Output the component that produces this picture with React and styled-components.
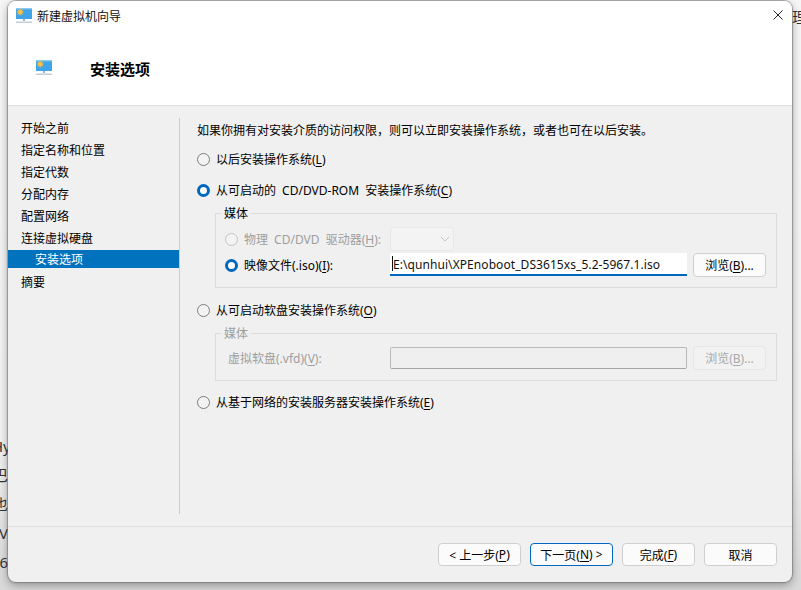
import React from 'react';
import styled, { createGlobalStyle } from 'styled-components';

const GlobalStyle = createGlobalStyle`
  html, body {
    margin: 0;
    padding: 0;
    background: #e6e6e6;
    overflow: hidden;
  }
  * {
    box-sizing: border-box;
  }
`;

const navItems = [
  { name: '开始之前' },
  { name: '指定名称和位置' },
  { name: '指定代数' },
  { name: '分配内存' },
  { name: '配置网络' },
  { name: '连接虚拟硬盘' },
  { name: '安装选项', active: true },
  { name: '摘要' },
];

const leftScraps = [
  { text: 'Hy', top: 436 },
  { text: '巴', top: 465 },
  { text: '也', top: 494 },
  { text: 'V', top: 523 },
  { text: '6', top: 552 },
];

function MonitorIcon({ width = 16, height = 16 }) {
  return (
    <svg width={width} height={height} viewBox="0 0 16 16">
      <rect x="0" y="0.5" width="16" height="10.5" fill="#3fa4e8" />
      <rect x="0" y="0.5" width="16" height="1" fill="#72c3f3" />
      <circle cx="4.2" cy="4" r="2.6" fill="#f7b52c" />
      <path d="M4.2 0.4v7.2M0.8 4h6.8M1.8 1.6l4.8 4.8M6.6 1.6l-4.8 4.8" stroke="#f7c85c" strokeWidth="0.7" />
      <rect x="7" y="11" width="2" height="2" fill="#9fb4c4" />
      <rect x="0" y="13.5" width="16" height="1.5" fill="#c3ced6" />
    </svg>
  );
}

function Key({ children }) {
  return <KeyLetter>{children}</KeyLetter>;
}

export default function App() {
  return (
    <Desktop>
      <GlobalStyle />
      {leftScraps.map(({ text, top }) => (
        <LeftScrap key={top} style={{ top }}>
          {text}
        </LeftScrap>
      ))}
      <RightScrap>理</RightScrap>
      <Wizard>
        <TitleBar>
          <MonitorIcon />
          <TitleText>新建虚拟机向导</TitleText>
          <CloseButton>
            <svg width="10" height="10" viewBox="0 0 10 10">
              <path d="M0.5 0.5l9 9M9.5 0.5l-9 9" stroke="#222" strokeWidth="1" fill="none" />
            </svg>
          </CloseButton>
        </TitleBar>
        <Banner>
          <MonitorIcon />
          <BannerTitle>安装选项</BannerTitle>
        </Banner>
        <Body>
          <Sidebar>
            {navItems.map(({ name, active }) => (
              <NavItem key={name} $active={active}>
                {name}
              </NavItem>
            ))}
          </Sidebar>
          <Content>
            <Intro>如果你拥有对安装介质的访问权限，则可以立即安装操作系统，或者也可在以后安装。</Intro>
            <OptionRow $mt={11}>
              <Radio />
              <span>
                以后安装操作系统(<Key>L</Key>)
              </span>
            </OptionRow>
            <OptionRow $mt={13}>
              <Radio $checked />
              <SpacedText>
                从可启动的 CD/DVD-ROM 安装操作系统(<Key>C</Key>)
              </SpacedText>
            </OptionRow>
            <MediaGroup $height={75} $pt={13}>
              <GroupLegend>媒体</GroupLegend>
              <FieldRow>
                <FieldLabel $disabled>
                  <Radio $disabled />
                  <SpacedText>
                    物理 CD/DVD 驱动器(<Key>H</Key>):
                  </SpacedText>
                </FieldLabel>
                <DriveSelect>
                  <svg width="10" height="6" viewBox="0 0 10 6">
                    <path d="M1 1l4 4 4-4" stroke="#c4c4c4" strokeWidth="1" fill="none" />
                  </svg>
                </DriveSelect>
              </FieldRow>
              <FieldRow $mt={2}>
                <FieldLabel>
                  <Radio $checked />
                  <span>
                    映像文件(.iso)(<Key>I</Key>):
                  </span>
                </FieldLabel>
                <PathInput>
                  <Caret />
                  E:\qunhui\XPEnoboot_DS3615xs_5.2-5967.1.iso
                </PathInput>
                <BrowseButton>
                  浏览(<Key>B</Key>)...
                </BrowseButton>
              </FieldRow>
            </MediaGroup>
            <OptionRow $mt={13}>
              <Radio />
              <span>
                从可启动软盘安装操作系统(<Key>O</Key>)
              </span>
            </OptionRow>
            <MediaGroup $height={48} $pt={12}>
              <GroupLegend $disabled>媒体</GroupLegend>
              <FieldRow>
                <FieldLabel $disabled $indent>
                  <span>
                    虚拟软盘(.vfd)(<Key>V</Key>):
                  </span>
                </FieldLabel>
                <PathInput $disabled />
                <BrowseButton $disabled>
                  浏览(<Key>B</Key>)...
                </BrowseButton>
              </FieldRow>
            </MediaGroup>
            <OptionRow $mt={12}>
              <Radio />
              <span>
                从基于网络的安装服务器安装操作系统(<Key>E</Key>)
              </span>
            </OptionRow>
          </Content>
        </Body>
        <Footer>
          <FooterButton $wide>
            &lt; 上一步(<Key>P</Key>)
          </FooterButton>
          <FooterButton $wide $primary>
            下一页(<Key>N</Key>) &gt;
          </FooterButton>
          <FooterButton>
            完成(<Key>F</Key>)
          </FooterButton>
          <FooterButton>取消</FooterButton>
        </Footer>
      </Wizard>
    </Desktop>
  );
}

const fontStack = `"Noto Sans", "Noto Sans CJK SC", sans-serif`;

const Desktop = styled.div`
  position: relative;
  width: 801px;
  height: 590px;
  overflow: hidden;
  background: linear-gradient(#f6f6f6, #f2f2f2 75%, #d8d8d8);
  font-family: ${fontStack};
  font-size: 12px;
  color: #000;
`;

const LeftScrap = styled.div`
  position: absolute;
  left: -8px;
  width: 16px;
  text-align: right;
  font-size: 15px;
  line-height: 20px;
  color: #333;
`;

const RightScrap = styled.div`
  position: absolute;
  left: 792px;
  top: 7px;
  font-size: 15px;
  line-height: 20px;
  color: #333;
`;

const Wizard = styled.div`
  position: absolute;
  left: 8px;
  top: 1px;
  width: 784px;
  height: 581px;
  display: flex;
  flex-direction: column;
  background: #f0f0f0;
  border-radius: 8px;
  overflow: hidden;
  box-shadow: 0 0 1px 1px rgba(110, 110, 110, 0.6), 0 3px 10px rgba(0, 0, 0, 0.35);
`;

const TitleBar = styled.div`
  height: 30px;
  display: flex;
  align-items: center;
  gap: 5px;
  padding: 0 8px;
  background: #fff;
`;

const TitleText = styled.div`
  flex: 1;
  font-size: 12px;
  color: #111;
`;

const CloseButton = styled.div`
  display: flex;
  margin: 0 1px 2px 0;
`;

const Banner = styled.div`
  height: 75px;
  display: flex;
  align-items: center;
  padding-left: 28px;
  gap: 38px;
  background: #fff;
  border-bottom: 1px solid #dfdfdf;
`;

const BannerTitle = styled.div`
  font-size: 15px;
  font-weight: 700;
  color: #000;
`;

const Body = styled.div`
  flex: 1;
  display: flex;
  padding: 12px 0;
`;

const Sidebar = styled.div`
  flex: none;
  width: 172px;
  border-right: 1px solid #cccccc;
`;

const NavItem = styled.div`
  height: ${(p) => (p.$active ? '18px' : '22px')};
  line-height: ${(p) => (p.$active ? '20px' : '22px')};
  margin: ${(p) => (p.$active ? '0 0 4px 0' : '0')};
  padding-left: ${(p) => (p.$active ? '27px' : '13px')};
  font-size: 12px;
  color: ${(p) => (p.$active ? '#fff' : '#000')};
  background: ${(p) => (p.$active ? '#0072be' : 'transparent')};
`;

const Content = styled.div`
  flex: 1;
  min-width: 0;
  padding: 0 15px 0 17px;
`;

const Intro = styled.div`
  font-size: 12px;
  line-height: 16px;
  margin-top: 5px;
  color: #000;
  white-space: nowrap;
`;

const OptionRow = styled.div`
  display: flex;
  align-items: center;
  gap: 6px;
  height: 18px;
  margin-top: ${(p) => p.$mt}px;
  font-size: 12px;
  color: #000;
`;

const SpacedText = styled.span`
  word-spacing: 3px;
`;

const Radio = styled.span`
  flex: none;
  width: 13px;
  height: 13px;
  border-radius: 50%;
  background: ${(p) => (p.$checked ? '#fff' : '#f3f3f3')};
  border: ${(p) =>
    p.$checked
      ? '3.5px solid #0067c0'
      : p.$disabled
        ? '1px solid #c2c2c2'
        : '1px solid #7d7d7d'};
`;

const MediaGroup = styled.div`
  position: relative;
  height: ${(p) => p.$height}px;
  margin: 14px 0 0 18px;
  padding: ${(p) => p.$pt}px 10px 0 9px;
  border: 1px solid #dcdcdc;
`;

const GroupLegend = styled.div`
  position: absolute;
  top: -7px;
  left: 5px;
  padding: 0 3px;
  background: #f0f0f0;
  line-height: 14px;
  font-size: 12px;
  color: ${(p) => (p.$disabled ? '#9e9e9e' : '#000')};
`;

const FieldRow = styled.div`
  display: flex;
  align-items: flex-start;
  height: 24px;
  margin-top: ${(p) => p.$mt || 0}px;
`;

const FieldLabel = styled.div`
  flex: none;
  width: 165px;
  height: 24px;
  display: flex;
  align-items: center;
  gap: 6px;
  padding-left: ${(p) => (p.$indent ? '3px' : '0')};
  font-size: 12px;
  white-space: nowrap;
  color: ${(p) => (p.$disabled ? '#9e9e9e' : '#000')};
`;

const DriveSelect = styled.div`
  width: 64px;
  height: 24px;
  display: flex;
  align-items: center;
  justify-content: flex-end;
  padding-right: 3px;
  background: #f3f3f3;
  border: 1px solid #e8e8e8;
  border-radius: 3px;
`;

const PathInput = styled.div`
  position: relative;
  flex: none;
  width: 297px;
  height: ${(p) => (p.$disabled ? '22px' : '23px')};
  margin-top: ${(p) => (p.$disabled ? '1px' : '0')};
  padding-left: 3px;
  line-height: 23px;
  font-size: 12px;
  letter-spacing: 0.07px;
  white-space: nowrap;
  color: #111;
  background: ${(p) => (p.$disabled ? '#efefef' : '#fff')};
  border: ${(p) => (p.$disabled ? '1px solid #b8b8b8' : 'none')};
  border-bottom: ${(p) => (p.$disabled ? '1px solid #a4a4a4' : '2px solid #0067c0')};
  border-radius: ${(p) => (p.$disabled ? '2px' : '0')};
`;

const Caret = styled.span`
  position: absolute;
  left: 2px;
  top: 3px;
  width: 1px;
  height: 15px;
  background: #111;
`;

const BrowseButton = styled.div`
  flex: none;
  width: 73px;
  height: 24px;
  margin-left: 6px;
  display: flex;
  align-items: center;
  justify-content: center;
  font-size: 12px;
  color: ${(p) => (p.$disabled ? '#a8a8a8' : '#000')};
  background: ${(p) => (p.$disabled ? '#f2f2f2' : '#fbfbfb')};
  border: 1px solid ${(p) => (p.$disabled ? '#e6e6e6' : '#cfcfcf')};
  border-radius: 4px;
`;

const KeyLetter = styled.span`
  text-decoration: underline;
  text-underline-offset: 2px;
`;

const Footer = styled.div`
  flex: none;
  height: 56px;
  display: flex;
  justify-content: flex-end;
  gap: 9px;
  padding: 16px 15px 0 0;
  border-top: 1px solid #dfdfdf;
`;

const FooterButton = styled.div`
  width: ${(p) => (p.$wide ? '83px' : '73px')};
  height: 23px;
  display: flex;
  align-items: center;
  justify-content: center;
  font-size: 12px;
  color: #000;
  background: #fbfbfb;
  border: 1px solid ${(p) => (p.$primary ? '#0067c0' : '#cfcfcf')};
  border-radius: 4px;
`;
